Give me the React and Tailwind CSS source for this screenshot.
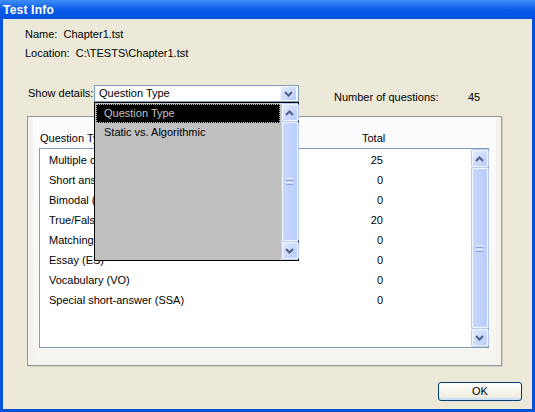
import React from 'react';

const font = { fontFamily: '"Liberation Sans", Arial, sans-serif' };

const rows = [
  ['Multiple choice (MC)', 25],
  ['Short answer (SA)', 0],
  ['Bimodal (BM)', 0],
  ['True/False (TF)', 20],
  ['Matching (MT)', 0],
  ['Essay (ES)', 0],
  ['Vocabulary (VO)', 0],
  ['Special short-answer (SSA)', 0],
];

// XP style chevron
const Chevron = ({ up }) => (
  <svg width="9" height="6" viewBox="0 0 9 6">
    <polyline
      points={up ? '1,5 4.5,1.5 8,5' : '1,1 4.5,4.5 8,1'}
      fill="none"
      stroke="#4d6185"
      strokeWidth="2"
    />
  </svg>
);

const ScrollButton = ({ up }) => (
  <div className="h-[17px] w-[16px] shrink-0 rounded-[2px] border border-[#f4f7fe] bg-gradient-to-br from-[#e2ebfe] to-[#b8cbf8] flex items-center justify-center shadow-[0_0_0_1px_#b6c9f4]">
    <Chevron up={up} />
  </div>
);

const Grip = () => (
  <div className="flex flex-col gap-[1px]">
    <div className="h-[1px] w-[7px] bg-[#eef3fe]" />
    <div className="h-[1px] w-[7px] bg-[#8aa3dd]" />
    <div className="h-[1px] w-[7px] bg-[#eef3fe]" />
    <div className="h-[1px] w-[7px] bg-[#8aa3dd]" />
  </div>
);

const ScrollBar = () => (
  <div className="w-[17px] h-full flex flex-col items-center gap-[1px] py-[1px] bg-[#fafaf6]">
    <ScrollButton up />
    <div className="flex-1 w-[16px] rounded-[2px] border border-[#f4f7fe] bg-gradient-to-r from-[#c9d8fc] to-[#b9cdfb] shadow-[0_0_0_1px_#b6c9f4] flex items-center justify-center">
      <Grip />
    </div>
    <ScrollButton />
  </div>
);

export default function App() {
  return (
    <div className="w-[535px] h-[412px] flex flex-col bg-[#ece9d8] text-[11px] text-black overflow-hidden" style={font}>
      {/* Title bar */}
      <div className="h-[19px] shrink-0 bg-gradient-to-b from-[#3d8df6] via-[#0a5ae8] to-[#0052e0] flex items-center pl-[3px]">
        <span className="text-white font-bold text-[12px] leading-none tracking-[0.2px]">Test Info</span>
      </div>

      {/* Body */}
      <div className="flex-1 flex flex-col border-x-[3px] border-b-[3px] border-[#0451dc] pl-[22px] pt-[9px]">
        <div className="leading-[13px]">Name:&nbsp; Chapter1.tst</div>
        <div className="leading-[13px] mt-[6px]">Location:&nbsp; C:\TESTS\Chapter1.tst</div>

        {/* Show details row */}
        <div className="flex items-start h-[17px] mt-[25px] pl-[3px]">
          <span className="leading-[17px] w-[66px]">Show details:</span>
          <div className="relative w-[205px] h-[17px] border border-[#7f9db9] bg-white flex items-center">
            <span className="pl-[4px] flex-1 leading-[15px]">Question Type</span>
            <div className="h-[15px] w-[17px] mr-[1px] rounded-[2px] border border-[#f4f7fe] bg-gradient-to-br from-[#e2ebfe] to-[#b8cbf8] flex items-center justify-center">
              <Chevron />
            </div>

            {/* open dropdown list */}
            <div className="absolute left-[-1px] top-[16px] w-[205px] h-[159px] border border-black bg-[#c0c0c0] flex z-10">
              <div className="flex-1 pt-[1px] pl-[1px]">
                <div className="h-[19px] bg-black outline outline-1 outline-dotted outline-[#c0c0c0] -outline-offset-1 text-[#c0c0c0] leading-[19px] pl-[8px]">
                  Question Type
                </div>
                <div className="h-[19px] leading-[19px] pl-[8px]">Static vs. Algorithmic</div>
              </div>
              <div className="w-[18px] h-full pl-[1px]">
                <ScrollBar />
              </div>
            </div>
          </div>
          <span className="leading-[17px] mt-[4px] ml-[35px] w-[134px]">Number of questions:</span>
          <span className="leading-[17px] mt-[4px]">45</span>
        </div>

        {/* Panel */}
        <div className="mt-[14px] ml-[2px] w-[475px] h-[250px] border border-[#919b9c] bg-[#f4f3ee] p-[5px] pt-[1px] pl-[5px] shadow-[1px_1px_0_#d5d2c3]">
          <div className="w-full h-full bg-gradient-to-b from-[#fcfcfe] to-[#f6f5f0] flex flex-col">
            <div className="flex leading-[13px] mt-[14px] pl-[7px]">
              <span className="w-[322px]">Question Type</span>
              <span>Total</span>
            </div>
            <div className="mt-[3px] ml-[6px] w-[450px] h-[200px] border border-[#7f9db9] bg-white flex">
              <div className="flex-1 pt-[1px]">
                {rows.map(([label, n]) => (
                  <div key={label} className="flex h-[20px] items-center pl-[9px]">
                    <span className="w-[300px]">{label}</span>
                    <span className="w-[34px] text-right">{n}</span>
                  </div>
                ))}
              </div>
              <ScrollBar />
            </div>
          </div>
        </div>

        {/* OK button */}
        <div className="flex justify-end pr-[10px] mt-[16px]">
          <button className="w-[84px] h-[19px] rounded-[3px] border border-[#003c74] bg-gradient-to-b from-white to-[#ece9d8] shadow-[inset_0_-2px_0_#c9dff7] leading-[15px]">
            OK
          </button>
        </div>
      </div>
    </div>
  );
}
